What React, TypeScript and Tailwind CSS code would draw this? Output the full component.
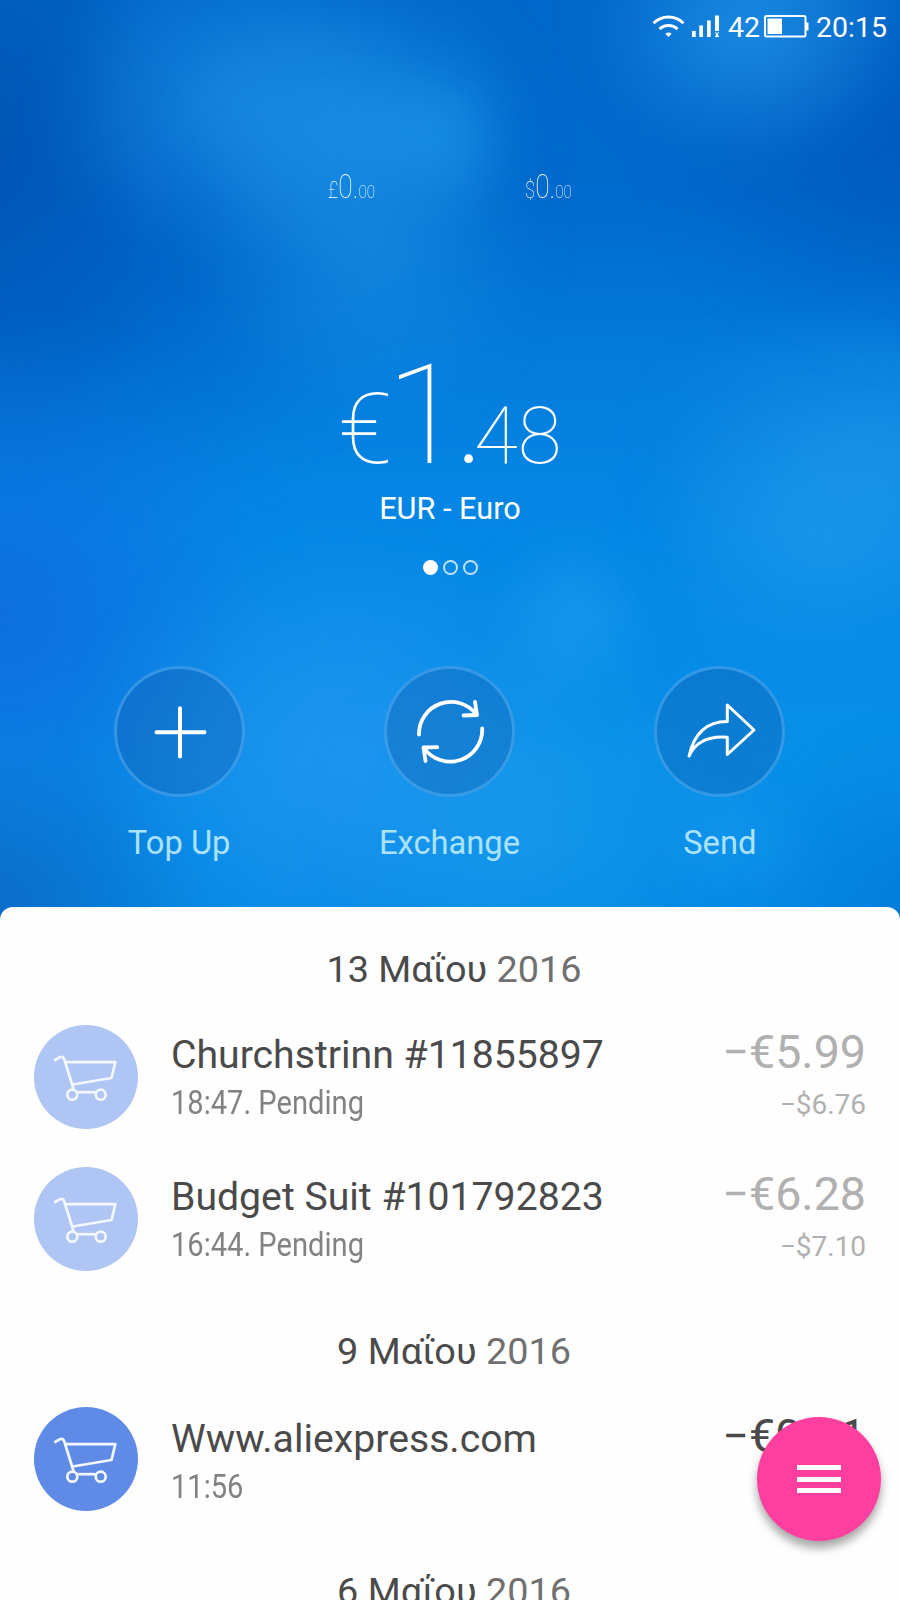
import type { ReactNode } from "react";
import clsx from "clsx";

type Transaction = {
    title: string;
    note: string;
    amount: string;
    converted?: string;
    pending?: boolean;
};

type Day = { date: string; year: string; items: Transaction[] };

const DAYS: Day[] = [
    {
        date: "13 Μαΐου",
        year: "2016",
        items: [
            { title: "Churchstrinn #11855897", note: "18:47. Pending", amount: "−€5.99", converted: "−$6.76", pending: true },
            { title: "Budget Suit #101792823", note: "16:44. Pending", amount: "−€6.28", converted: "−$7.10", pending: true },
        ],
    },
    {
        date: "9 Μαΐου",
        year: "2016",
        items: [{ title: "Www.aliexpress.com", note: "11:56", amount: "−€0.91" }],
    },
    { date: "6 Μαΐου", year: "2016", items: [] },
];

// Soft light and dark spots behind the balance
const GLOWS = [
    "left-[-230px] top-[-160px] w-[420px] h-[640px] bg-[radial-gradient(closest-side,rgba(0,76,168,0.75),transparent)]",
    "left-[-240px] top-[80px] w-[640px] h-[420px] bg-[radial-gradient(closest-side,rgba(0,88,190,0.6),transparent)]",
    "left-[660px] top-[-60px] w-[560px] h-[420px] bg-[radial-gradient(closest-side,rgba(0,84,184,0.75),transparent)]",
    "left-[-280px] top-[330px] w-[560px] h-[580px] bg-[radial-gradient(closest-side,rgba(16,104,222,0.85),transparent)]",
    "left-[-260px] top-[740px] w-[480px] h-[340px] bg-[radial-gradient(closest-side,rgba(14,98,190,0.8),transparent)]",
    "left-[50px] top-[-60px] w-[380px] h-[330px] bg-[radial-gradient(closest-side,rgba(32,146,232,0.7),transparent)]",
    "left-[190px] top-[-20px] w-[350px] h-[290px] bg-[radial-gradient(closest-side,rgba(34,152,236,0.7),transparent)]",
    "left-[375px] top-[65px] w-[130px] h-[140px] bg-[radial-gradient(closest-side,rgba(36,160,242,0.6),transparent)]",
    "left-[190px] top-[80px] w-[350px] h-[340px] bg-[radial-gradient(closest-side,rgba(30,148,230,0.6),transparent)]",
    "left-[590px] top-[-110px] w-[320px] h-[270px] bg-[radial-gradient(closest-side,rgba(36,150,234,0.8),transparent)]",
    "left-[640px] top-[300px] w-[480px] h-[300px] bg-[radial-gradient(closest-side,rgba(38,156,236,0.5),transparent)]",
    "left-[640px] top-[400px] w-[360px] h-[270px] bg-[radial-gradient(closest-side,rgba(38,160,238,0.5),transparent)]",
    "left-[490px] top-[540px] w-[160px] h-[170px] bg-[radial-gradient(closest-side,rgba(40,164,244,0.6),transparent)]",
    "left-[90px] top-[530px] w-[500px] h-[450px] bg-[radial-gradient(closest-side,rgba(36,150,242,0.8),transparent)]",
    "left-[330px] top-[650px] w-[400px] h-[360px] bg-[radial-gradient(closest-side,rgba(28,158,236,0.6),transparent)]",
    "left-[660px] top-[780px] w-[150px] h-[120px] bg-[radial-gradient(closest-side,rgba(36,160,244,0.5),transparent)]",
    "left-[760px] top-[740px] w-[320px] h-[340px] bg-[radial-gradient(closest-side,rgba(0,116,214,0.7),transparent)]",
];

function StatusBar() {
    return (
        <div className="flex h-[55px] items-center justify-end pr-[13px] text-[28.500px] leading-[36px]">
            <svg className="mr-[7px] -mt-[3px] h-[24px] w-[33px]" viewBox="0 0 33 24" fill="none" stroke="white" strokeWidth="3">
                <path d="M1.5 9.2a21.5 21.5 0 0 1 30 0" />
                <path d="M7.5 15.2a13 13 0 0 1 18 0" />
                <path d="M13.3 19.8a5 5 0 0 1 6.4 0L16.500 23z" fill="white" stroke="none" />
            </svg>
            <svg className="mr-[8px] -mt-[3px] h-[24px] w-[28px]" viewBox="0 0 28 24" fill="white">
                <path d="M0 17h3.700v6H0zM7.300 11.500H11V23H7.300zM15 6.500h3.700V23H15zM23 1.500h4v15.500H23zM23 18.200h1.300v1.200h1.400v-1.200h1.300v1.300h-1v2.200h1V23h-4v-1.300h1v-2.200h-1z" />
            </svg>
            <span>42</span>
            <svg className="mr-[7px] ml-[4px] -mt-[3px] h-[24px] w-[45px]" viewBox="0 0 45 24" fill="none">
                <rect x="1" y="2" width="40.500" height="20.500" rx="1.500" stroke="white" strokeWidth="2" />
                <path d="M3.500 4.500h14.500v15.500H3.500z" fill="white" />
                <path d="M42 8.500h2.500v8H42z" fill="white" />
            </svg>
            <span>20:15</span>
        </div>
    );
}

function SmallBalance({ symbol }: { symbol: string }) {
    return (
        <div className="flex w-[197px] scale-x-[0.8] items-baseline justify-center font-thin">
            <span className="text-[23px] leading-none">{symbol}</span>
            <span className="text-[33px] leading-[35px]">0.</span>
            <span className="text-[19px] leading-none">00</span>
        </div>
    );
}

function Action({ label, children }: { label: string; children: ReactNode }) {
    return (
        <button type="button" className="flex flex-col items-center">
            <span className="h-[131px] w-[131px] rounded-full border-[3px] border-[#5cb4f8]/50 bg-[#14509a]/28">
                <svg className="-m-[3px] h-[131px] w-[131px]" viewBox="0 0 131 131" fill="none" stroke="white" strokeLinecap="round" strokeLinejoin="round">
                    {children}
                </svg>
            </span>
            <span className="mt-[26px] text-[32.700px] leading-[40px] text-[#ace2fc]">{label}</span>
        </button>
    );
}

function CartIcon({ pending }: { pending?: boolean }) {
    return (
        <div className={clsx("mt-[19px] h-[104px] w-[104px] shrink-0 rounded-full", pending ? "bg-[#afc5f3]" : "bg-[#5f8be7]")}>
            <svg className="h-[104px] w-[104px]" viewBox="0 0 104 104" fill="none" stroke="#f3f7ff" strokeWidth="2.700" strokeLinejoin="round">
                <path d="M20.300 35.500L25.500 32.300Q29 31 30.300 34.500L40 65.500" />
                <path d="M31.500 37.200H81.300L77.500 53L38.500 59.500" />
                <path d="M43.500 67.200H61.500" />
                <circle cx="38.300" cy="69.700" r="5" />
                <circle cx="66.700" cy="69.700" r="5" />
            </svg>
        </div>
    );
}

function Row({ item }: { item: Transaction }) {
    return (
        <div className="flex h-[142px] pr-[34px] pl-[34px]">
            <CartIcon pending={item.pending} />
            <div className={clsx("ml-[33px] flex-1", item.pending ? "pt-[25px]" : "pt-[27px]")}>
                <div className="text-[39.200px] leading-[48px] text-[#4a4a4a]">{item.title}</div>
                <div className="mt-[4px] origin-left scale-x-[0.882] text-[33px] leading-[40px] text-[#828282]">{item.note}</div>
            </div>
            <div className={clsx("text-right", item.pending ? "pt-[22px] text-[#b0b0b0]" : "pt-[24px] text-[#4a4a4a]")}>
                <div className="text-[46.600px] leading-[48px]">{item.amount}</div>
                {item.converted && <div className="mt-[9px] text-[28px] leading-[40px]">{item.converted}</div>}
            </div>
        </div>
    );
}

export default function App() {
    return (
        <div className="relative h-[1600px] w-[900px] overflow-hidden bg-[linear-gradient(to_bottom,#0068ca_0px,#006ace_200px,#047cdc_360px,#0588e6_540px,#0890e8_760px,#068ae6_920px)] font-[Roboto,'Noto_Sans',sans-serif] text-white">
            {GLOWS.map((glow) => (
                <div key={glow} className={clsx("pointer-events-none absolute blur-xl", glow)} />
            ))}

            <div className="relative">
                <StatusBar />

                <div className="mt-[114px] flex h-[36px] justify-center">
                    <SmallBalance symbol="£" />
                    <SmallBalance symbol="$" />
                </div>

                <div className="mt-[140px] flex h-[140px] items-baseline justify-center font-thin">
                    <span className="mr-[-6px] text-[98px] leading-none">€</span>
                    <span className="mr-[-6px] text-[140px] leading-[140px]">1</span>
                    <span className="mr-[-8px] text-[105px] leading-none font-light">.</span>
                    <span className="text-[80px] leading-none">48</span>
                </div>
                <div className="mt-[4px] text-center text-[30.700px] leading-[40px]">EUR - Euro</div>
                <div className="mt-[31px] flex justify-center gap-[5px]">
                    <span className="h-[15px] w-[15px] rounded-full bg-white" />
                    <span className="h-[15px] w-[15px] rounded-full border-2 border-white/75" />
                    <span className="h-[15px] w-[15px] rounded-full border-2 border-white/75" />
                </div>

                <div className="mt-[91px] grid grid-cols-3 pr-[45px] pl-[44px]">
                    <Action label="Top Up">
                        <path d="M42.500 66.200H90.500M66 42.200V90.500" strokeWidth="4" />
                    </Action>
                    <Action label="Exchange">
                        <g strokeWidth="3.800">
                            <path d="M35 68.500A32 32 0 0 1 92.500 48.500" />
                            <path d="M91 36L93 49L79.500 49.500" />
                            <path d="M98.200 62.500A32 32 0 0 1 40 82" />
                            <path d="M53.200 81.200L39.500 81.500L41.500 95" />
                        </g>
                    </Action>
                    <Action label="Send">
                        <path d="M35 90C40 68 52 55.500 73.300 55.500V39L100 64L73.300 88.500V71.300C55 70 42 75 35 90Z" strokeWidth="3" />
                    </Action>
                </div>

                <div className="mt-[44px] h-[700px] overflow-hidden rounded-t-[13px] bg-[#fefefe] pt-[38px]">
                    {DAYS.map((day) => (
                        <section key={day.date} className="mb-[37px]">
                            <h2 className="mb-[13px] pl-[8px] text-center text-[37.800px] leading-[48px] text-[#4a4a4a]">
                                {day.date} <span className="text-[#707070]">{day.year}</span>
                            </h2>
                            {day.items.map((item) => (
                                <Row key={item.title} item={item} />
                            ))}
                        </section>
                    ))}
                </div>
            </div>

            <button type="button" className="absolute top-[1417px] left-[757px] flex h-[124px] w-[124px] flex-col items-center justify-center gap-[6.500px] rounded-full bg-[#ff3fa0] shadow-[0_7px_10px_rgba(0,0,0,0.35)]">
                <span className="h-[5px] w-[44px] bg-white" />
                <span className="h-[5px] w-[44px] bg-white" />
                <span className="h-[5px] w-[44px] bg-white" />
            </button>
        </div>
    );
}
